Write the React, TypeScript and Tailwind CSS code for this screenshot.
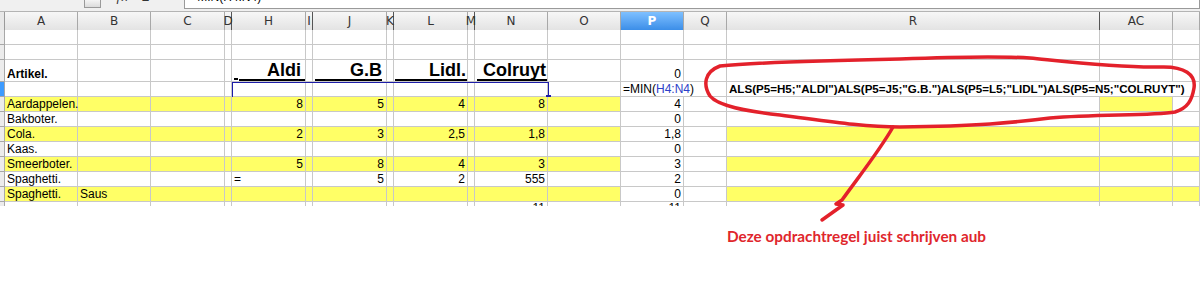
import React from 'react';

const grid =
  'grid grid-cols-[5px_73px_73px_74px_7px_74px_7px_74px_7px_74px_7px_73px_73px_63px_43px_373px_73px_27px]';

const headers = ['A', 'B', 'C', 'D', 'H', 'I', 'J', 'K', 'L', 'M', 'N', 'O', 'P', 'Q', 'R', 'AC', ''];

type CellDef = { t?: React.ReactNode; right?: boolean; bold?: boolean; nb?: boolean };

// yellow columns for the striped rows
const stripe = [0, 1, 2, 3, 4, 5, 6, 7, 8, 9, 10, 11, 14, 15, 16];
const firstRow = [0, 1, 2, 3, 4, 5, 6, 7, 8, 9, 10, 11, 15];

function Cell({ c, yellow }: { c?: CellDef; yellow: boolean }) {
  return (
    <div
      className={
        'flex items-end whitespace-nowrap border-b border-[#c8c8c8] text-[12px] leading-[14px] text-black ' +
        (c?.nb ? '' : 'border-r ') +
        (c?.right ? 'justify-end pr-[2px] ' : 'justify-start pl-[2px] ') +
        (c?.bold ? 'font-bold ' : '') +
        (yellow ? 'bg-[#ffff66]' : '')
      }
    >
      {c?.t !== undefined && <span>{c.t}</span>}
    </div>
  );
}

function Row({
  h,
  cells = {},
  yellow = [],
  active = false,
  children,
}: {
  h: string;
  cells?: Record<number, CellDef>;
  yellow?: number[];
  active?: boolean;
  children?: React.ReactNode;
}) {
  return (
    <div className={grid + ' relative ' + h}>
      <div className={'border-b border-r border-[#a8a8a8] ' + (active ? 'bg-[#3d9bff]' : 'bg-[#ececec]')} />
      {headers.map((_, i) => (
        <Cell key={i} c={cells[i]} yellow={yellow.includes(i)} />
      ))}
      {children}
    </div>
  );
}

const n = (t: string): CellDef => ({ t, right: true });

export default function App() {
  return (
    <div className="relative h-[287px] w-[1200px] overflow-hidden bg-white font-['Liberation_Sans',Arial,sans-serif]">
      {/* formula bar remnant */}
      <div className="flex h-[12px] items-start overflow-hidden border-b border-[#b4b4b4] bg-[#f0f0f0]">
        <div className="ml-[84px] h-[8px] w-[17px] border border-t-0 border-[#9a9a9a] bg-linear-to-b from-[#f4f4f4] to-[#dcdcdc]" />
        <div className="ml-[14px] -mt-[10px] flex gap-[14px] text-[12px] leading-[14px] text-[#333]">
          <span className="italic">ƒx</span>
          <span>Σ</span>
          <span>=</span>
        </div>
        <div className="ml-[14px] flex h-[9px] flex-1 items-start overflow-hidden border border-t-0 border-[#9a9a9a] bg-white pl-[5px]">
          <span className="-mt-[10px] text-[12px] leading-[14px]">=MIN(H4:N4)</span>
        </div>
      </div>

      {/* column headers */}
      <div className={grid + ' h-[18px] border-b border-[#9a9a9a] font-["DejaVu_Sans",sans-serif] text-[12px] text-[#333]'}>
        <div className="border-r border-[#9a9a9a] bg-[#e8e8e8]" />
        {headers.map((hd, i) => (
          <div
            key={i}
            className={
              'flex items-center justify-center border-r ' +
              ([3, 5, 7, 9].includes(i) ? 'relative z-10 border-[#555] ' : i === 14 ? 'border-[#555] ' : 'border-[#a8a8a8] ') +
              (hd === 'P'
                ? 'bg-linear-to-b from-[#7ec0ff] to-[#3b8ee8] font-bold text-white'
                : 'bg-linear-to-b from-[#f7f7f7] to-[#e3e3e3]')
            }
          >
            {hd}
          </div>
        ))}
      </div>

      <Row h="h-[15px]" />
      <Row h="h-[15px]" />

      {/* row 3: shop names */}
      <div className={grid + ' h-[22px]'}>
        <div className="border-b border-r border-[#a8a8a8] bg-[#ececec]" />
        <div className="flex items-end border-b border-r border-[#c8c8c8] pl-[2px] text-[12px] font-bold leading-[14px]">
          Artikel.
        </div>
        <div className="border-b border-r border-[#c8c8c8]" />
        <div className="border-b border-r border-[#c8c8c8]" />
        <div className="border-b border-r border-[#c8c8c8]" />
        <div className="flex items-end justify-between border-b border-r border-[#c8c8c8] pl-[2px]">
          <span className="mb-[1px] w-[4px] border-b-2 border-black" />
          <span className="w-[66px] border-b-2 border-black pr-[4px] text-right text-[18px] font-bold leading-[18px]">Aldi</span>
        </div>
        <div className="border-b border-r border-[#c8c8c8]" />
        <div className="flex items-end border-b border-r border-[#c8c8c8] pl-[2px]">
          <span className="w-[67px] border-b-2 border-black text-right text-[18px] font-bold leading-[18px]">G.B</span>
        </div>
        <div className="border-b border-r border-[#c8c8c8]" />
        <div className="flex items-end border-b border-r border-[#c8c8c8] pl-[1px]">
          <span className="w-[72px] border-b-2 border-black pr-[1px] text-right text-[18px] font-bold leading-[18px]">Lidl.</span>
        </div>
        <div className="border-b border-r border-[#c8c8c8]" />
        <div className="flex items-end border-b border-r border-[#c8c8c8] pl-[2px]">
          <span className="w-[70px] border-b-2 border-black pr-[1px] text-right text-[18px] font-bold leading-[18px]">Colruyt</span>
        </div>
        <div className="border-b border-r border-[#c8c8c8]" />
        <div className="flex items-end justify-end border-b border-r border-[#c8c8c8] pr-[2px] text-[12px] leading-[14px]">0</div>
        <div className="border-b border-r border-[#c8c8c8]" />
        <div className="border-b border-r border-[#c8c8c8]" />
        <div className="border-b border-r border-[#c8c8c8]" />
        <div className="border-b border-r border-[#c8c8c8]" />
      </div>

      {/* row 4: formulas + selection */}
      <Row
        h="h-[15px]"
        active
        cells={{
          12: {
            nb: true,
            t: (
              <>
                =MIN(<span className="text-[#2d3fc8]">H4:N4</span>)
              </>
            ),
          },
          14: {
            nb: true,
            t: (
              <span className="text-[11.6px] font-bold">
                ALS(P5=H5;"ALDI")ALS(P5=J5;"G.B.")ALS(P5=L5;"LIDL")ALS(P5=N5;"COLRUYT")
              </span>
            ),
          },
          15: { nb: true },
        }}
      >
        <div className="absolute left-[232px] top-0 h-[16px] w-[317px] border border-[#1c1ca8]" />
        <div className="absolute left-[546px] top-[13px] h-[5px] w-[5px] bg-[#1c1ca8]" />
      </Row>

      <Row h="h-[15px]" yellow={firstRow} cells={{ 0: { t: 'Aardappelen.' }, 4: n('8'), 6: n('5'), 8: n('4'), 10: n('8'), 12: n('4') }} />
      <Row h="h-[15px]" cells={{ 0: { t: 'Bakboter.' }, 12: n('0') }} />
      <Row h="h-[15px]" yellow={stripe} cells={{ 0: { t: 'Cola.' }, 4: n('2'), 6: n('3'), 8: n('2,5'), 10: n('1,8'), 12: n('1,8') }} />
      <Row h="h-[15px]" cells={{ 0: { t: 'Kaas.' }, 12: n('0') }} />
      <Row h="h-[15px]" yellow={stripe} cells={{ 0: { t: 'Smeerboter.' }, 4: n('5'), 6: n('8'), 8: n('4'), 10: n('3'), 12: n('3') }} />
      <Row h="h-[15px]" cells={{ 0: { t: 'Spaghetti.' }, 4: { t: '=' }, 6: n('5'), 8: n('2'), 10: n('555'), 12: n('2') }} />
      <Row h="h-[15px]" yellow={stripe} cells={{ 0: { t: 'Spaghetti.' }, 1: { t: 'Saus' }, 12: n('0') }} />

      {/* partially visible last row */}
      <div className={grid + ' h-[4px] overflow-hidden'}>
        <div className="border-r border-[#a8a8a8] bg-[#ececec]" />
        {headers.map((_, i) => (
          <div key={i} className="flex items-start justify-end overflow-hidden border-r border-[#c8c8c8] pr-[2px] text-[12px] leading-[14px]">
            {(i === 10 || i === 12) && <span className="-mt-[1px]">11</span>}
          </div>
        ))}
      </div>

      <p className="mt-[21px] pl-[727px] font-['Lato',sans-serif] text-[15.3px] font-bold leading-[18px] text-[#e0262c]">
        Deze opdrachtregel juist schrijven aub
      </p>

      {/* red hand-drawn annotation */}
      <svg className="pointer-events-none absolute left-0 top-0" width="1200" height="287" viewBox="0 0 1200 287">
        <path
          d="M720 66 C760 62 850 60 900 59 C950 57 1000 56 1030 58 C1070 62 1120 68 1160 67 C1185 66 1196 75 1194 88 C1192 100 1188 108 1175 112 C1150 116 1100 114 1050 118 C1010 123 980 126 900 127 C860 127 820 120 780 115 C745 111 718 106 710 96 C703 85 704 72 720 66 Z"
          fill="none"
          stroke="#e3212b"
          strokeWidth="3.5"
          strokeLinejoin="round"
        />
        <path
          d="M893 127 C880 150 860 175 842 200 L836 204 L843 205 L822 220"
          fill="none"
          stroke="#e3212b"
          strokeWidth="3.5"
          strokeLinecap="round"
          strokeLinejoin="round"
        />
      </svg>
    </div>
  );
}
